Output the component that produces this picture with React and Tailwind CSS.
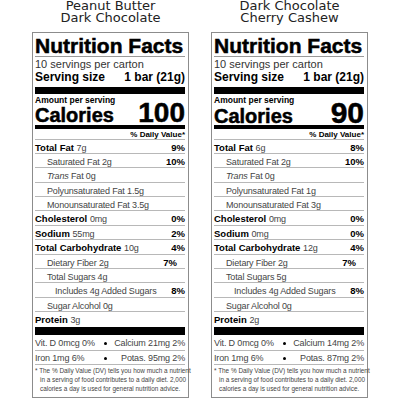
import React from 'react';

const labels = [
  {
    title: ['Peanut Butter', 'Dark Chocolate'],
    calories: '100',
    rows: [
      { bold: 'Total Fat', amount: '7g', dv: '9%' },
      { text: 'Saturated Fat 2g', dv: '10%', indent: 1 },
      { trans: '0g', indent: 1 },
      { text: 'Polyunsaturated Fat 1.5g', indent: 1 },
      { text: 'Monounsaturated Fat 3.5g', indent: 1 },
      { bold: 'Cholesterol', amount: '0mg', dv: '0%' },
      { bold: 'Sodium', amount: '55mg', dv: '2%' },
      { bold: 'Total Carbohydrate', amount: '10g', dv: '4%' },
      { text: 'Dietary Fiber 2g', dv: '7%', indent: 1, inset: true },
      { text: 'Total Sugars 4g', indent: 1 },
      { text: 'Includes 4g Added Sugars', dv: '8%', indent: 2 },
      { text: 'Sugar Alcohol 0g', indent: 1 },
    ],
    protein: '3g',
    vitamins: [
      ['Vit. D 0mcg 0%', 'Calcium 21mg 2%'],
      ['Iron 1mg 6%', 'Potas. 95mg 2%'],
    ],
  },
  {
    title: ['Dark Chocolate', 'Cherry Cashew'],
    calories: '90',
    rows: [
      { bold: 'Total Fat', amount: '6g', dv: '8%' },
      { text: 'Saturated Fat 2g', dv: '10%', indent: 1 },
      { trans: '0g', indent: 1 },
      { text: 'Polyunsaturated Fat 1g', indent: 1 },
      { text: 'Monounsaturated Fat 3g', indent: 1 },
      { bold: 'Cholesterol', amount: '0mg', dv: '0%' },
      { bold: 'Sodium', amount: '0mg', dv: '0%' },
      { bold: 'Total Carbohydrate', amount: '12g', dv: '4%' },
      { text: 'Dietary Fiber 2g', dv: '7%', indent: 1, inset: true },
      { text: 'Total Sugars 5g', indent: 1 },
      { text: 'Includes 4g Added Sugars', dv: '8%', indent: 2 },
      { text: 'Sugar Alcohol 0g', indent: 1 },
    ],
    protein: '2g',
    vitamins: [
      ['Vit. D 0mcg 0%', 'Calcium 14mg 2%'],
      ['Iron 1mg 6%', 'Potas. 87mg 2%'],
    ],
  },
];

const thin = 'text-[9px] tracking-[-0.15px] text-[#444]';
const heavy = 'text-[9.5px] font-bold text-black';

function Row({ row }) {
  const pad = row.indent === 2 ? 'pl-[20px]' : row.indent === 1 ? 'pl-[12px]' : '';
  return (
    <div className={`h-[14.4px] pt-[1px] text-[9.5px] leading-[13px] border-b border-[#b8b8b8] flex justify-between whitespace-nowrap ${pad}`}>
      <div>
        {row.bold && (
          <>
            <span className={heavy}>{row.bold}</span> <span className={thin}>{row.amount}</span>
          </>
        )}
        {row.text && <span className={thin}>{row.text}</span>}
        {row.trans && (
          <span className={thin}>
            <i>Trans</i> Fat {row.trans}
          </span>
        )}
      </div>
      {row.dv && <span className={`${heavy} ${row.inset ? 'pr-[8px]' : ''}`}>{row.dv}</span>}
    </div>
  );
}

function Label({ label }) {
  return (
    <div className="w-[157px] flex flex-col">
      <div className="text-center text-[13px] leading-[12px] text-[#222] font-['DejaVu_Sans',sans-serif]">
        <div>{label.title[0]}</div>
        <div>{label.title[1]}</div>
      </div>

      <div className="mt-[8px] border border-[#8c8c8c] pl-[2px] pr-[3px] pt-[3px] pb-[4px] font-['Liberation_Sans',Arial,sans-serif] text-black">
        <div className="h-[20px] leading-[20px] text-[21px] font-bold whitespace-nowrap [-webkit-text-stroke:0.5px_black]">Nutrition Facts</div>
        <div className="h-px bg-[#999]" />
        <div className="mt-[1px] leading-[12px] text-[11px] text-[#333]">10 servings per carton</div>
        <div className="mt-[1px] h-[13px] leading-[13px] text-[12px] font-bold flex justify-between">
          <span>Serving size</span>
          <span>1 bar (21g)</span>
        </div>
        <div className="mt-[3px] h-[7px] bg-black" />
        <div className="mt-[2.5px] leading-[7px] text-[8.5px] font-bold">Amount per serving</div>
        <div className="h-[18px] flex justify-between items-baseline font-bold [-webkit-text-stroke:0.5px_black]">
          <span className="text-[20px] leading-[18px]">Calories</span>
          <span className={`${label.calories.length > 2 ? 'text-[28px]' : 'text-[30px]'} leading-[18px]`}>{label.calories}</span>
        </div>
        <div className="mt-[3px] h-[4px] bg-black" />
        <div className="mt-[2px] h-[8px] leading-[8px] text-[8px] font-bold text-right">% Daily Value*</div>
        <div className="h-px bg-[#b8b8b8]" />

        {label.rows.map((row, i) => (
          <Row key={i} row={row} />
        ))}

        <div className="h-[14.7px] pt-[1px] text-[9.5px] leading-[13px] whitespace-nowrap">
          <span className={heavy}>Protein</span> <span className={thin}>{label.protein}</span>
        </div>
        <div className="h-[8px] bg-black" />

        {label.vitamins.map((pair, i) => (
          <div
            key={i}
            className={`${i === 0 ? 'h-[16px] leading-[15px]' : 'h-[14px] leading-[13px]'} pt-[1.5px] border-b border-[#b8b8b8] grid grid-cols-[66px_8px_1fr] items-start whitespace-nowrap ${thin}`}
          >
            <span>{pair[0]}</span>
            <span className="flex justify-center self-center pb-[1px]">
              <span className="w-[3px] h-[3px] rounded-full bg-black" />
            </span>
            <span className="justify-self-end">{pair[1]}</span>
          </div>
        ))}

        <div className="mt-[1.5px] text-[6.4px] leading-[9px] text-[#444] whitespace-nowrap">
          <div>* The % Daily Value (DV) tells you how much a nutrient</div>
          <div className="pl-[5px]">in a serving of food contributes to a daily diet. 2,000</div>
          <div className="pl-[5px]">calories a day is used for general nutrition advice.</div>
        </div>
      </div>
    </div>
  );
}

export default function App() {
  return (
    <div className="w-[400px] h-[400px] bg-white overflow-hidden flex gap-[22px] pl-[32px]">
      {labels.map((label, i) => (
        <Label key={i} label={label} />
      ))}
    </div>
  );
}
